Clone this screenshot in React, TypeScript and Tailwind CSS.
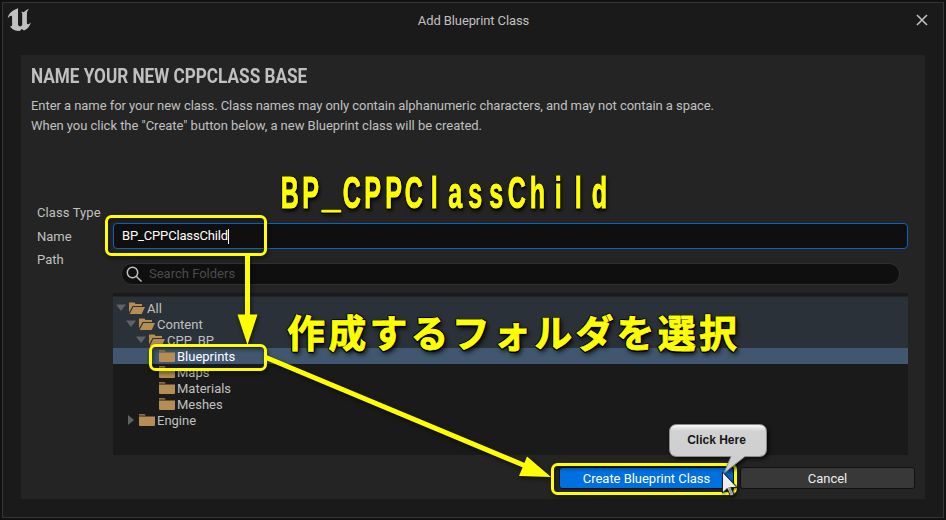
import type { ReactNode } from "react";

function Folder({ open = false }: { open?: boolean }) {
  return (
    <svg width="16" height="12" viewBox="0 0 16 12" className="shrink-0" fill="#b68d52">
      {open ? (
        <>
          <path d="M0 10.500V.5h5.400l1.200 1.500H13v2H3.600z" />
          <path d="M4.300 5H16L12.700 12H.7z" />
        </>
      ) : (
        <>
          <path d="M0 .3h5.600l1.200 1.200H0z" />
          <path d="M0 2.400h16V11a1 1 0 0 1-1 1H1a1 1 0 0 1-1-1z" />
        </>
      )}
    </svg>
  );
}

function Arrow({ down }: { down: boolean }) {
  return (
    <svg width="10" height="10" viewBox="0 0 10 10" className="mr-[3px] shrink-0" fill="#606265">
      {down ? <path d="M0 1.500h10L5 8z" /> : <path d="M2 0l6 5-6 5z" />}
    </svg>
  );
}

type Row = { name: string; pad: string; state: "open" | "closed" | "leaf"; bg: string };

const rows: Row[] = [
  { name: "All", pad: "pl-[3px]", state: "open", bg: "" },
  { name: "Content", pad: "pl-[13px]", state: "open", bg: "" },
  { name: "CPP_BP", pad: "pl-[23px]", state: "open", bg: "" },
  { name: "Blueprints", pad: "pl-[46px]", state: "leaf", bg: "bg-[#40576f] text-white" },
  { name: "Maps", pad: "pl-[46px]", state: "leaf", bg: "" },
  { name: "Materials", pad: "pl-[46px]", state: "leaf", bg: "" },
  { name: "Meshes", pad: "pl-[46px]", state: "leaf", bg: "" },
  { name: "Engine", pad: "pl-[13px]", state: "closed", bg: "" },
];

function TreeRow({ row }: { row: Row }) {
  return (
    <div className={`flex h-4 items-center ${row.pad} ${row.bg}`}>
      {row.state !== "leaf" && <Arrow down={row.state === "open"} />}
      <Folder open={row.state === "open"} />
      <span className="ml-[2px] pt-px leading-4">{row.name}</span>
    </div>
  );
}

function Button({ children, className }: { children: ReactNode; className: string }) {
  return (
    <button className={`flex h-[22px] items-center justify-center rounded-[3px] border border-[#111] leading-none tracking-[-0.03px] ${className}`}>
      {children}
    </button>
  );
}

const outline =
  "[text-shadow:1.500px_0_#000,-1.500px_0_#000,0_1.500px_#000,0_-1.500px_#000,1px_1px_#000,-1px_1px_#000,1px_-1px_#000,-1px_-1px_#000,2px_3px_5px_#000]";

function Annotations() {
  return (
    <div className="pointer-events-none absolute inset-0">
      <svg className="absolute inset-0 drop-shadow-[1px_2px_2px_rgba(0,0,0,0.6)]" width="946" height="520" fill="none" stroke="#ff0" strokeWidth="3">
        <rect x="106.500" y="216.500" width="159" height="38" rx="5" />
        <rect x="150.500" y="345.500" width="115" height="24" rx="5" />
        <rect x="552.500" y="464.500" width="183" height="29" rx="5" />
        <path d="M247.500 255v62" strokeWidth="5" />
        <path d="M266 357.500L528 467" strokeWidth="5" />
        <path d="M237.500 314.500h20L247.500 345z" fill="#ff0" stroke="none" />
        <path d="M527 456.500L551 477l-32-1z" fill="#ff0" stroke="none" />
      </svg>
      <div className={`absolute left-[280px] top-[171px] flex font-['Liberation_Sans',sans-serif] text-[44px] font-bold leading-[44px] text-[#ff0] [-webkit-text-stroke:1px_#ff0] ${outline}`}>
        {"BP_CPPClassChild".split("").map((c, i) => (
          <span key={i} className="flex w-[20.600px] justify-center">
            <span className={c === "_" ? "inline-block scale-x-[0.75] -translate-y-px" : "inline-block scale-x-[0.57]"}>{c}</span>
          </span>
        ))}
      </div>
      <div className={`absolute left-[287px] top-[308px] whitespace-nowrap font-['Noto_Sans_CJK_JP',sans-serif] text-[38px] font-bold leading-[46px] tracking-[3.200px] text-[#ff0] [-webkit-text-stroke:0.800px_#ff0] ${outline}`}>
        作成するフォルダを選択
      </div>
      <svg className="absolute left-[660px] top-[418px] drop-shadow-[2px_2px_2px_rgba(0,0,0,0.7)]" width="116" height="60">
        <defs>
          <linearGradient id="bubble" gradientUnits="userSpaceOnUse" x1="0" x2="0" y1="6" y2="39">
            <stop offset="0" stopColor="#fff" />
            <stop offset=".22" stopColor="#d2d2d2" />
            <stop offset="1" stopColor="#cfcfcf" />
          </linearGradient>
        </defs>
        <path d="M17 6.500H99q7.500 0 7.500 7.500v17q0 7.500-7.500 7.500H85L64 55l7-16.500H17q-7.500 0-7.500-7.500V14q0-7.500 7.500-7.500z" fill="url(#bubble)" stroke="#8b8b8b" />
      </svg>
      <div className="absolute left-[668px] top-[432px] w-[97px] text-center font-['Liberation_Sans',sans-serif] text-[12px] font-bold leading-4 text-[#171717]">Click Here</div>
      <svg className="absolute left-[721px] top-[470px] drop-shadow-[1px_1px_1px_rgba(0,0,0,0.6)]" width="18" height="28">
        <path d="M1.500 2v21l4.700-4.500 3.300 7.500 3.500-1.500-3.300-7H16z" fill="#eee" stroke="#222" />
        <path d="M7 17.500l2.500 7.500 2.500-1-3.200-7z" fill="#999" />
      </svg>
    </div>
  );
}

export default function App() {
  return (
    <div className="relative h-[520px] w-[946px] overflow-hidden bg-[#111] p-[2px] font-['Roboto',sans-serif] text-[13px] text-[#c0c0c0]">
      <div className="flex h-[516px] w-[942px] flex-col border border-[#353535] bg-[#1a1a1a]">
        <header className="flex h-[52px] items-start justify-between">
          <svg className="ml-[4px] mt-[5px]" width="25" height="24" viewBox="0 0 25 24" fill="#c0c0c0">
            <path d="M11.200.2C5.500 2 1.300 5.500.8 10.200 2 8.200 3.400 7.400 4.300 7.700c.7.200.8.800.8 1.700v7.400c0 1.300-.8 1.800-2.100 1.600 2.200 3.300 5.500 4.600 9.700 4.600l2.100-2 2.200 1.500c3.400-1.200 5.900-4.300 7-8.300-1.300 1.500-2.400 2.100-3.100 2.100-.8 0-1-.5-1-1.200V5.700c0-1.900.9-3.400 2.200-4.700-2.400.6-4.100 1.700-5.200 3.300-.7-.6-1.800-.7-2.800-.5 1 .9 1.100 1.700 1.100 2.900v10.500l-1.800 1.300c-1.600 0-2.400-.8-2.400-2.400V3.500c0-1.300 0-2.300.2-3.300z" />
          </svg>
          <h1 className="mt-[10px] text-[13px] leading-4 tracking-[-0.1px]">Add Blueprint Class</h1>
          <svg className="mr-[14px] mt-[10px]" width="14" height="14" stroke="#c0c0c0" strokeWidth="1.600">
            <path d="M2 2l10 10m0-10l-10 10" />
          </svg>
        </header>
        <main className="ml-[18px] flex h-[444px] w-[904px] flex-col bg-[#242424] px-[10px]">
          <h2 className="mt-[9px] w-max origin-left scale-x-[0.817] whitespace-nowrap text-[21px] font-bold leading-6">NAME YOUR NEW CPPCLASS BASE</h2>
          <p className="mt-[8px] w-max whitespace-nowrap leading-5 tracking-[-0.052px]">
            Enter a name for your new class. Class names may only contain alphanumeric characters, and may not contain a space.
            <br />
            <span className="tracking-[-0.030px]">When you click the "Create" button below, a new Blueprint class will be created.</span>
          </p>
          <section className="mt-[65px] flex h-[262px] pl-[6px]">
            <div className="w-[76px] shrink-0 whitespace-nowrap leading-6">
              <div className="tracking-[0.100px]">Class Type</div>
              <div>Name</div>
              <div className="-mt-px">Path</div>
            </div>
            <div className="flex w-[795px] flex-col pt-[22px]">
              <div className="flex h-[26px] shrink-0 items-center rounded-[4px] border border-[#0b62c2] bg-[#0f0f0f] pl-[8px] tracking-[-0.150px] text-white">
                BP_CPPClassChild<span className="h-[15px] w-px bg-white" />
              </div>
              <div className="ml-[8px] mt-[14px] flex h-[22px] w-[779px] shrink-0 items-center rounded-full border border-[#303030] bg-[#0f0f0f] text-[#4b4b4b]">
                <svg className="ml-[4px] mr-[7px]" width="16" height="16" fill="none" stroke="#c0c0c0" strokeWidth="1.500">
                  <circle cx="6.500" cy="6.500" r="5.200" />
                  <path d="M10.500 10.500l5 5" />
                </svg>
                <span>Search Folders</span>
              </div>
              <div className="mt-[8px] h-[162px] shrink-0 border-t-[3px] border-[#1a1a1a] bg-[#1a1a1a]">
                <div className="border-t border-[#242424] bg-[linear-gradient(#2b3138_51px,#1a1a1a_51px)] pt-[3px]">
                  {rows.map((row) => (
                    <TreeRow key={row.name} row={row} />
                  ))}
                </div>
              </div>
            </div>
          </section>
          <div className="mt-[4px] flex shrink-0 justify-end gap-[6px]">
            <Button className="w-[175px] bg-[#0070e0] text-white">Create Blueprint Class</Button>
            <Button className="w-[175px] bg-[#383838] text-[#eee]">Cancel</Button>
          </div>
        </main>
      </div>
      <Annotations />
    </div>
  );
}
